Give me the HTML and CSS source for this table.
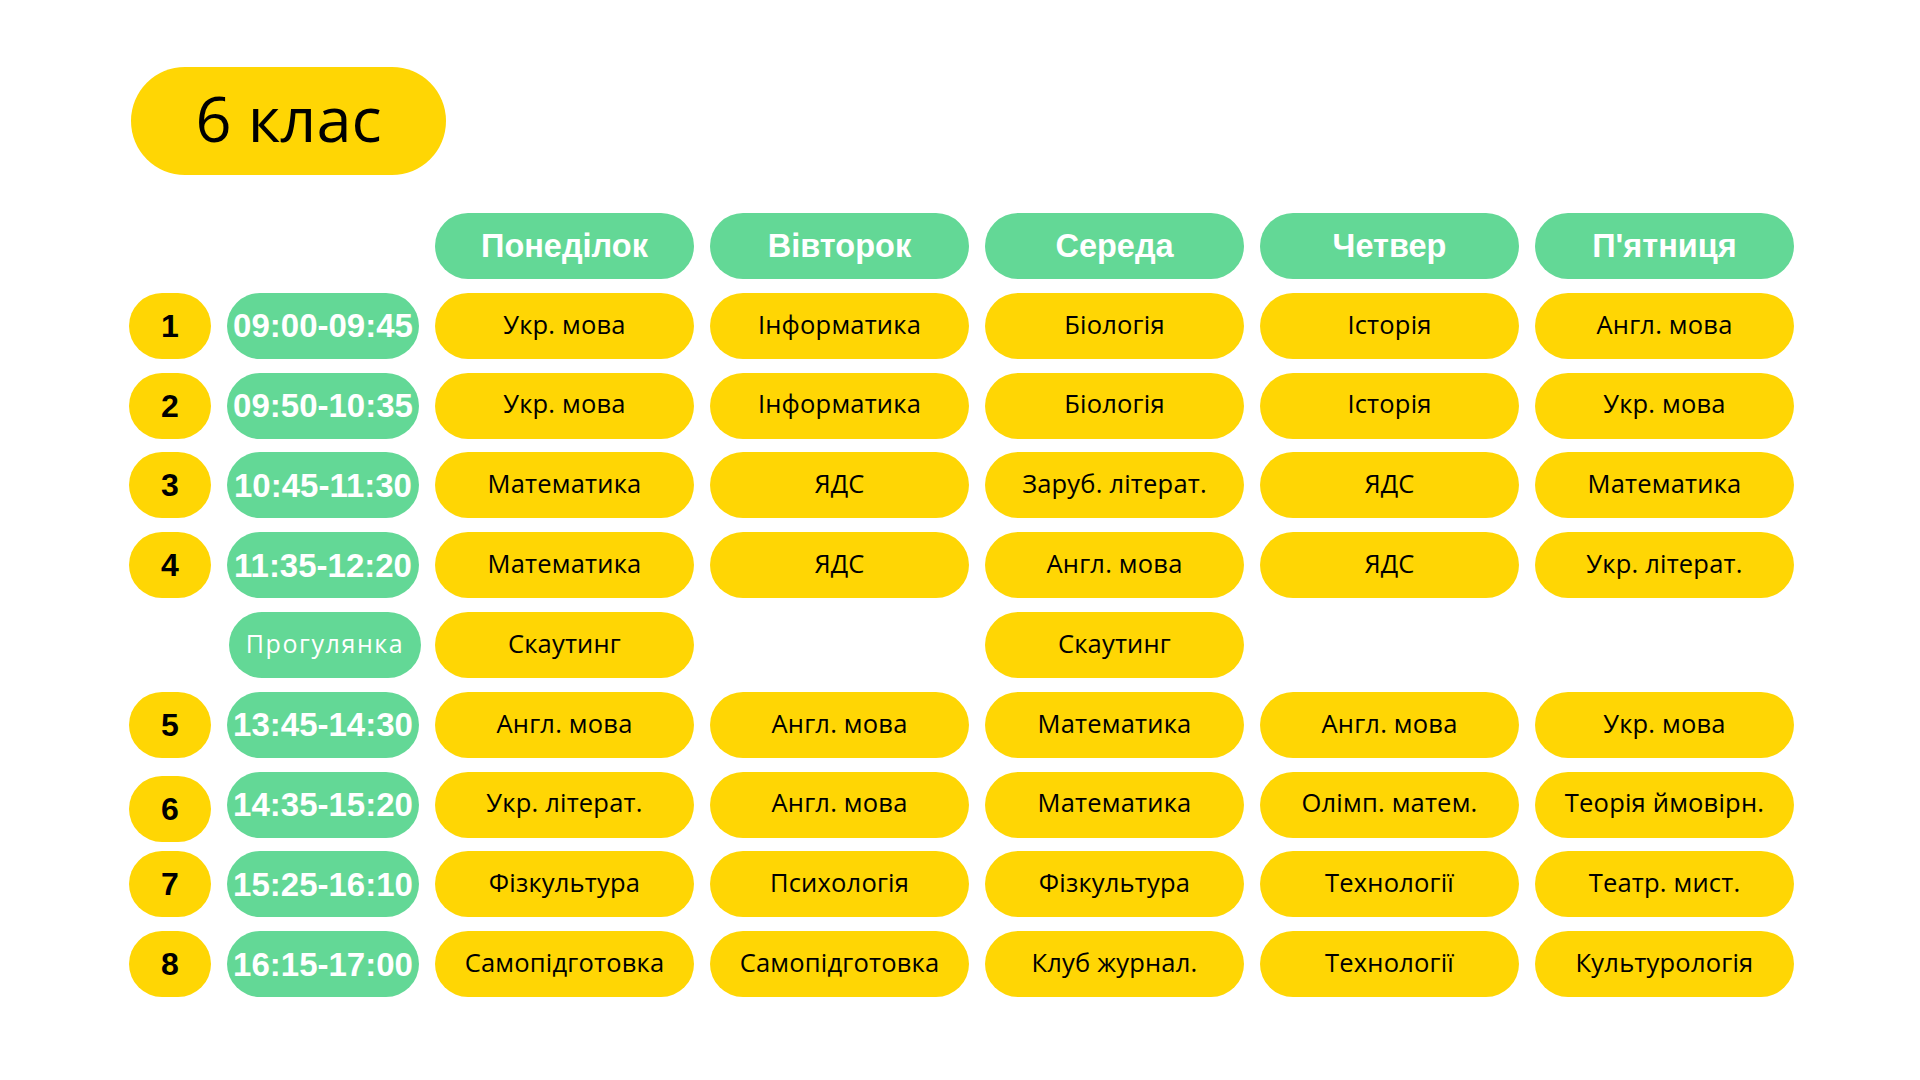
FILE: index.html
```html
<!DOCTYPE html>
<html lang="uk">
<head>
<meta charset="utf-8">
<title>6 клас — розклад</title>
<link rel="stylesheet" href="styles.css">
</head>
<body>
<main class="page">
  <h1 class="title">6 клас</h1>
  <div class="schedule">
    <div class="blank"></div><div class="blank"></div>
    <div class="pill day">Понеділок</div>
    <div class="pill day">Вівторок</div>
    <div class="pill day">Середа</div>
    <div class="pill day">Четвер</div>
    <div class="pill day">П'ятниця</div>

    <div class="pill num">1</div><div class="pill time">09:00-09:45</div>
    <div class="pill subj">Укр. мова</div><div class="pill subj">Інформатика</div><div class="pill subj">Біологія</div><div class="pill subj">Історія</div><div class="pill subj">Англ. мова</div>

    <div class="pill num">2</div><div class="pill time">09:50-10:35</div>
    <div class="pill subj">Укр. мова</div><div class="pill subj">Інформатика</div><div class="pill subj">Біологія</div><div class="pill subj">Історія</div><div class="pill subj">Укр. мова</div>

    <div class="pill num">3</div><div class="pill time">10:45-11:30</div>
    <div class="pill subj">Математика</div><div class="pill subj">ЯДС</div><div class="pill subj">Заруб. літерат.</div><div class="pill subj">ЯДС</div><div class="pill subj">Математика</div>

    <div class="pill num">4</div><div class="pill time">11:35-12:20</div>
    <div class="pill subj">Математика</div><div class="pill subj">ЯДС</div><div class="pill subj">Англ. мова</div><div class="pill subj">ЯДС</div><div class="pill subj">Укр. літерат.</div>

    <div class="blank"></div><div class="pill walk">Прогулянка</div>
    <div class="pill subj">Скаутинг</div><div class="blank"></div><div class="pill subj">Скаутинг</div><div class="blank"></div><div class="blank"></div>

    <div class="pill num">5</div><div class="pill time">13:45-14:30</div>
    <div class="pill subj">Англ. мова</div><div class="pill subj">Англ. мова</div><div class="pill subj">Математика</div><div class="pill subj">Англ. мова</div><div class="pill subj">Укр. мова</div>

    <div class="pill num num-low">6</div><div class="pill time">14:35-15:20</div>
    <div class="pill subj">Укр. літерат.</div><div class="pill subj">Англ. мова</div><div class="pill subj">Математика</div><div class="pill subj">Олімп. матем.</div><div class="pill subj">Теорія ймовірн.</div>

    <div class="pill num">7</div><div class="pill time">15:25-16:10</div>
    <div class="pill subj">Фізкультура</div><div class="pill subj">Психологія</div><div class="pill subj">Фізкультура</div><div class="pill subj">Технології</div><div class="pill subj">Театр. мист.</div>

    <div class="pill num">8</div><div class="pill time">16:15-17:00</div>
    <div class="pill subj">Самопідготовка</div><div class="pill subj">Самопідготовка</div><div class="pill subj">Клуб журнал.</div><div class="pill subj">Технології</div><div class="pill subj">Культурологія</div>
  </div>
</main>
</body>
</html>
```

FILE: styles.css
```css
html, body {
  margin: 0;
  padding: 0;
  background: #ffffff;
}

body {
  width: 1920px;
  height: 1080px;
  overflow: hidden;
  font-family: "Open Sans", "Noto Sans", sans-serif;
}

.page {
  padding: 67px 0 0 129px;
}

.title {
  margin: 0 0 38px 2px;
  width: 315px;
  height: 108px;
  border-radius: 54px;
  background: #ffd604;
  color: #000000;
  display: flex;
  align-items: center;
  justify-content: center;
  font-family: "Open Sans", "Noto Sans", sans-serif;
  font-weight: 400;
  font-size: 63px;
  line-height: 1;
  padding-bottom: 8px;
  box-sizing: border-box;
}

.schedule {
  display: grid;
  grid-template-columns: 82px 192px repeat(5, 259px);
  grid-auto-rows: 66px;
  column-gap: 16px;
  row-gap: 13.8px;
}

.pill {
  border-radius: 33px;
  display: flex;
  align-items: center;
  justify-content: center;
  white-space: nowrap;
  line-height: 1;
  box-sizing: border-box;
}

.day {
  background: #63d896;
  color: #ffffff;
  font-family: "Liberation Sans", Arial, sans-serif;
  font-weight: 700;
  font-size: 32.5px;
}

.num {
  background: #ffd604;
  color: #000000;
  font-family: "Liberation Sans", Arial, sans-serif;
  font-weight: 700;
  font-size: 32px;
}

.num-low {
  margin: 4px 0 -4px;
}

.time {
  background: #63d896;
  color: #ffffff;
  font-family: "Liberation Sans", Arial, sans-serif;
  font-weight: 700;
  font-size: 33px;
}

.subj {
  background: #ffd604;
  color: #000000;
  font-size: 25.5px;
  font-weight: 400;
  letter-spacing: 0.2px;
  padding-bottom: 3px;
}

.walk {
  background: #63d896;
  color: #ffffff;
  font-size: 25px;
  font-weight: 400;
  letter-spacing: 1.6px;
  padding-bottom: 3px;
  margin-left: 2px;
  margin-right: -2px;
}
```
